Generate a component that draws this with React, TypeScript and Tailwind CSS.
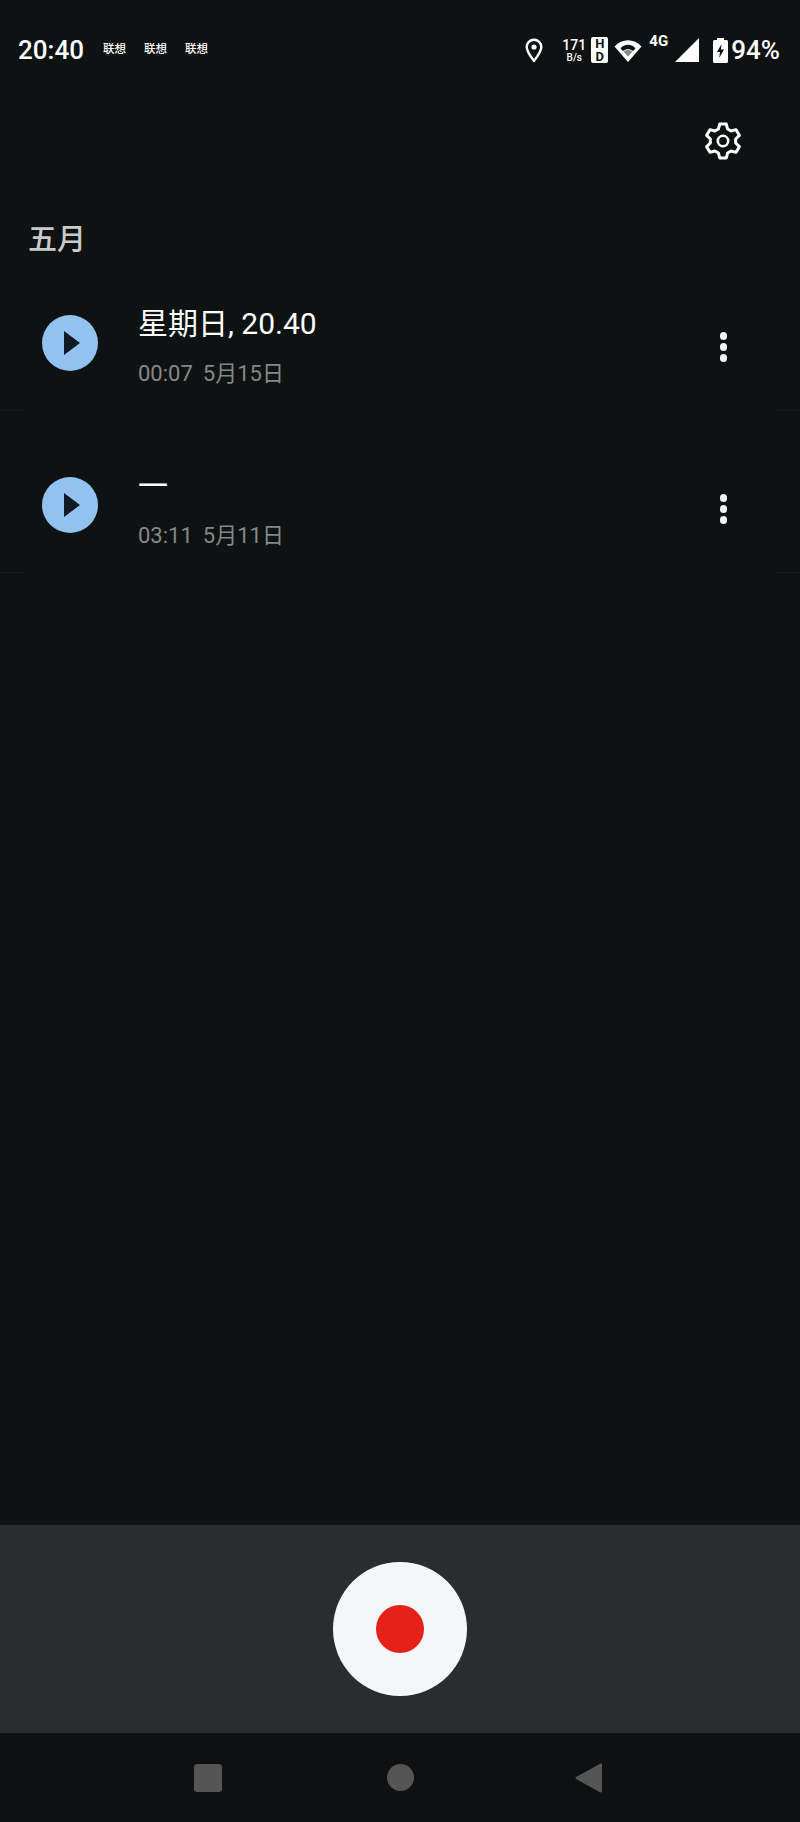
import { useMemo } from "react";

const font = "font-['Roboto','Noto_Sans_CJK_SC',sans-serif]";

const recordings = [
  { title: "星期日, 20.40", length: "00:07", date: "5月15日" },
  { title: "一", length: "03:11", date: "5月11日" },
];

function Gear() {
  // six teeth, outline only
  const d = useMemo(() => {
    const pts: string[] = [];
    const at = (r: number, deg: number) => {
      const a = (deg * Math.PI) / 180;
      return `${(20 + r * Math.cos(a)).toFixed(2)} ${(20 + r * Math.sin(a)).toFixed(2)}`;
    };
    for (let k = 0; k < 6; k++) {
      const c = k * 60 - 90;
      pts.push(at(12.8, c - 21), at(17.3, c - 11), at(17.3, c + 11), at(12.8, c + 21));
    }
    return "M" + pts.join(" L") + " Z";
  }, []);
  return (
    <svg className="w-[40px] h-[40px]" viewBox="0 0 40 40" fill="none">
      <path d={d} stroke="white" strokeWidth="3" strokeLinejoin="round" />
      <circle cx="20" cy="20" r="5.2" stroke="white" strokeWidth="2.6" />
    </svg>
  );
}

function StatusIcons() {
  return (
    <div className="flex items-center text-white">
      <svg className="w-[18px] h-[25px] mr-[19px]" viewBox="0 0 18 25" fill="none">
        <path d="M9 23 C5 17.5 1.7 13.5 1.7 9 A7.3 7.3 0 0 1 16.3 9 C16.3 13.5 13 17.5 9 23 Z" stroke="white" strokeWidth="2.4" strokeLinejoin="round" />
        <circle cx="9" cy="9" r="2.6" fill="white" />
      </svg>
      <div className="w-[24px] mr-[5px] flex flex-col items-center font-medium">
        <span className="text-[14px] leading-[14px]">171</span>
        <span className="text-[10px] leading-[11px]">B/s</span>
      </div>
      <div className="w-[17px] h-[26px] mr-[6px] rounded-[2px] bg-white flex flex-col items-center justify-center text-[#0e1212] text-[13px] leading-[13px] font-bold">
        <span>H</span>
        <span>D</span>
      </div>
      <svg className="w-[28px] h-[24px] mr-[7px]" viewBox="0 0 28 24">
        <path d="M14 24 L0.5 8.5 C8 0 20 0 27.5 8.5 Z" fill="white" />
        <path d="M6.5 10.5 C10 5.5 18 5.5 21.5 10.5 L19 13 C16.5 10.5 11.5 10.5 9 13 Z" fill="#0e1212" />
        <path d="M9.5 13.5 C12 11.5 16 11.5 18.5 13.5 L14 18.5 Z" fill="#8a8a8a" />
      </svg>
      <span className="w-[24px] mr-[2px] self-start mt-[-1px] text-[15px] leading-[15px] font-bold">4G</span>
      <svg className="w-[24px] h-[24px] mr-[14px]" viewBox="0 0 24 24">
        <path d="M24 0 V24 H0 Z" fill="white" />
      </svg>
      <svg className="w-[15px] h-[25px] mr-[3px]" viewBox="0 0 15 25">
        <path d="M4 0 H11 V2 H13.5 A1.5 1.5 0 0 1 15 3.5 V23.5 A1.5 1.5 0 0 1 13.5 25 H1.5 A1.5 1.5 0 0 1 0 23.5 V3.5 A1.5 1.5 0 0 1 1.5 2 H4 Z" fill="white" />
        <path d="M8.6 6 L4 14 H7 L6.2 20 L11 11.5 H7.9 Z" fill="#0e1212" />
      </svg>
      <span className="text-[26px] leading-[30px] font-medium">94%</span>
    </div>
  );
}

function Row({ title, length, date }: { title: string; length: string; date: string }) {
  return (
    <div className="relative h-[162px] pl-[42px] pr-[73px] flex items-start">
      <button className="mt-[66px] w-[56px] h-[56px] shrink-0 rounded-full bg-[#93c2f0] flex items-center justify-center">
        <svg className="w-[16px] h-[24px] ml-[3px]" viewBox="0 0 16 24">
          <path d="M0 0 L16 12 L0 24 Z" fill="#0e1a24" />
        </svg>
      </button>
      <div className="ml-[40px] mt-[57px] flex-1">
        <div className="text-[30px] leading-[36px] text-white">{title}</div>
        <div className="mt-[19px] text-[22px] leading-[26px] text-[#858888] flex gap-[10px]">
          <span>{length}</span>
          <span>{date}</span>
        </div>
      </div>
      <button className="mt-[83px] flex flex-col gap-[3.5px]">
        <span className="w-[7.5px] h-[7.5px] rounded-full bg-[#f2f2f2]" />
        <span className="w-[7.5px] h-[7.5px] rounded-full bg-[#f2f2f2]" />
        <span className="w-[7.5px] h-[7.5px] rounded-full bg-[#f2f2f2]" />
      </button>
      {/* hairline only shows at the screen edges */}
      <div className="absolute left-0 bottom-0 w-[24px] h-px bg-[#161a1a]" />
      <div className="absolute right-0 bottom-0 w-[24px] h-px bg-[#161a1a]" />
    </div>
  );
}

export default function App() {
  return (
    <div className={`${font} w-[800px] h-[1822px] bg-[#0e1212] flex flex-col overflow-hidden`}>
      {/* status bar */}
      <div className="h-[100px] pl-[18px] pr-[20px] flex items-center justify-between shrink-0">
        <div className="flex items-center text-white">
          <span className="text-[26px] font-medium leading-[30px] w-[85px]">20:40</span>
          <div className="flex gap-[18px] text-[11.5px] font-medium">
            <span>联想</span>
            <span>联想</span>
            <span>联想</span>
          </div>
        </div>
        <StatusIcons />
      </div>

      {/* toolbar */}
      <div className="h-[64px] flex items-center justify-end pr-[57px] shrink-0 translate-y-[9px]">
        <Gear />
      </div>

      <div className="pl-[28px] mt-[66px] mb-[-1px] text-[29px] leading-[20px] font-medium text-[#c9cbca]">五月</div>

      <div>
        {recordings.map((r) => (
          <Row key={r.length} {...r} />
        ))}
      </div>

      <div className="flex-1" />

      {/* record */}
      <div className="h-[208px] bg-[#2a2d30] flex items-center justify-center shrink-0">
        <button className="w-[134px] h-[134px] rounded-full bg-[#f4f6f8] flex items-center justify-center">
          <span className="w-[48px] h-[48px] rounded-full bg-[#e5211a]" />
        </button>
      </div>

      {/* nav bar */}
      <div className="h-[89px] bg-[#0e1011] pl-[194px] flex items-center shrink-0">
        <div className="w-[28px] h-[28px] rounded-[3px] bg-[#555555] mr-[164.5px]" />
        <div className="w-[27px] h-[27px] rounded-full bg-[#555555] mr-[161px]" />
        <svg className="w-[28px] h-[30px]" viewBox="0 0 28 30">
          <path d="M26 1.5 V28.5 L1.5 15 Z" fill="#555555" stroke="#555555" strokeWidth="2" strokeLinejoin="round" />
        </svg>
      </div>
    </div>
  );
}
